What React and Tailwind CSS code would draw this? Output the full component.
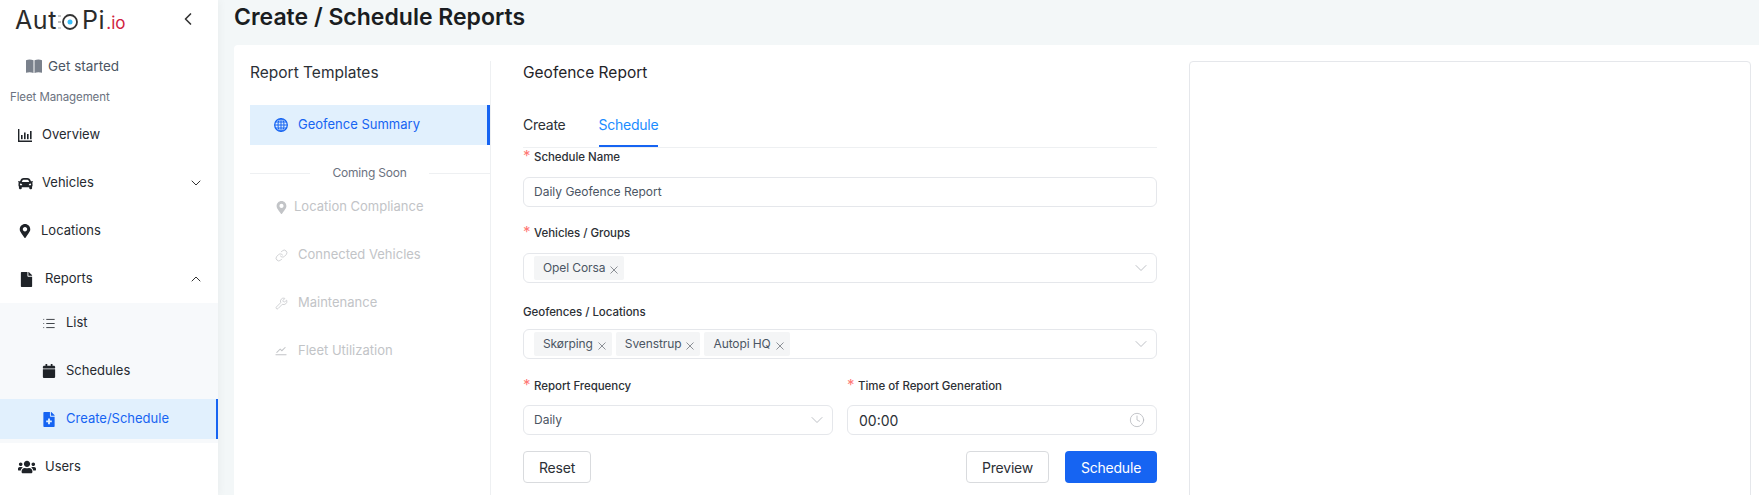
import React from "react";
import { ChevronLeft, ChevronDown, ChevronUp, Clock, Link, Wrench, List } from "lucide-react";
import { FaCar, FaFile, FaCalendar, FaUsers, FaMapMarkerAlt, FaFileMedical } from "react-icons/fa";
import { AiOutlineStock } from "react-icons/ai";

function Logo() {
  return (
    <div className="flex items-baseline text-[#2b2b2b] leading-[24px] ml-[15px] mt-[8px] h-[26px]">
      <span className="text-[25px] font-normal tracking-[0.6px]">Aut</span>
      <svg width="22" height="20" viewBox="0 0 22 20" className="self-center ml-[1px] mt-[1px]">
        <rect x="0" y="3" width="3" height="2" fill="#c9c9c9" />
        <rect x="0" y="9" width="3" height="2" fill="#bdbdbd" />
        <rect x="0" y="15" width="3" height="2" fill="#d8d8d8" />
        <circle cx="12" cy="10" r="7" fill="none" stroke="#333" strokeWidth="1.8" />
        <circle cx="12" cy="10" r="2.5" fill="#38bdf8" />
      </svg>
      <span className="text-[25px] tracking-[0.6px] ml-[2px]">Pi</span>
      <span className="text-[17px] text-[#d0213f] ml-[1px]">.io</span>
    </div>
  );
}

function ChartIcon() {
  return (
    <svg width="14" height="13" viewBox="0 0 14 13" fill="#1f2328">
      <path d="M0 0h1.4v11.4H14V13H0z" />
      <rect x="3" y="6" width="1.6" height="4.2" />
      <rect x="6" y="3.5" width="1.6" height="6.7" />
      <rect x="9" y="5" width="1.6" height="5.2" />
      <rect x="12" y="2" width="1.6" height="8.2" />
    </svg>
  );
}

function BookIcon() {
  return (
    <svg width="16" height="14" viewBox="0 0 16 14" fill="#7a818c">
      <path d="M0 1.2C2.4.2 5.2.3 7.5 1.3V14C5.2 13 2.4 13 0 13.8z" />
      <path d="M16 1.2C13.6.2 10.8.3 8.5 1.3V14c2.3-1 5.1-1 7.5-.2z" />
    </svg>
  );
}

function GlobeIcon() {
  return (
    <svg width="14" height="14" viewBox="0 0 14 14" fill="none" stroke="#1664f2" strokeWidth="1">
      <circle cx="7" cy="7" r="6.3" strokeWidth="1.3" />
      <ellipse cx="7" cy="7" rx="3" ry="6.3" />
      <path d="M7 .7v12.6M.7 7h12.6M1.5 4h11M1.5 10h11" />
    </svg>
  );
}

function TagClose() {
  return (
    <svg width="8" height="8" viewBox="0 0 8 8" className="ml-[5px] mt-[4px] shrink-0" stroke="#80858b" strokeWidth="0.9" fill="none">
      <path d="M.5.5l7 7M7.5.5l-7 7" />
    </svg>
  );
}

function NavItem({ icon, label, gap, chevron }) {
  return (
    <div className="h-[40px] flex items-center pl-[18px] pr-[14px] text-[13px] text-[#262a30]">
      <span className="flex justify-start text-[#1f2328] shrink-0">{icon}</span>
      <span style={{ marginLeft: gap }}>{label}</span>
      {chevron && <span className="ml-auto text-[#333]">{chevron}</span>}
    </div>
  );
}

function SubItem({ icon, label, active }) {
  return (
    <div className={"h-[40px] flex items-center pl-[42px] text-[13px] " + (active ? "bg-[#e1f0fd] text-[#1664f2] border-r-2 border-[#1664f2]" : "text-[#262a30]")}>
      <span className="w-[14px] flex justify-center shrink-0">{icon}</span>
      <span className="ml-[10px]">{label}</span>
    </div>
  );
}

function Sidebar() {
  return (
    <aside className="w-[218px] shrink-0 bg-white h-full flex flex-col overflow-hidden shadow-[2px_0_8px_rgba(0,0,0,0.04)] z-10">
      <div className="flex items-start justify-between pr-[20px] h-[48px]">
        <Logo />
        <ChevronLeft size={20} strokeWidth={2} className="mt-[9px] text-[#333]" />
      </div>
      <div className="flex items-center h-[24px] pl-[26px] mt-[6px] text-[13.5px] text-[#4b5563]">
        <BookIcon />
        <span className="ml-[6px]">Get started</span>
      </div>
      <div className="pl-[10px] mt-[10px] h-[18px] leading-[18px] text-[11.5px] tracking-[-0.1px] text-[#6b7280]">Fleet Management</div>
      <div className="mt-[9px] flex flex-col gap-[8px]">
        <NavItem icon={<ChartIcon />} label="Overview" gap="10px" />
        <NavItem icon={<FaCar size={15} />} label="Vehicles" gap="9px" chevron={<ChevronDown size={16} strokeWidth={1.5} />} />
        <NavItem icon={<FaMapMarkerAlt size={14} />} label="Locations" gap="9px" />
        <NavItem icon={<FaFile size={15} className="ml-[1px]" />} label="Reports" gap="11px" chevron={<ChevronUp size={16} strokeWidth={1.5} />} />
      </div>
      <div className="bg-[#f7f9fb] mt-[4px] pb-[4px] flex flex-col gap-[8px]">
        <SubItem icon={<List size={15} strokeWidth={1.5} />} label="List" />
        <SubItem icon={<FaCalendar size={14} className="text-[#1f2328]" />} label="Schedules" />
        <SubItem icon={<FaFileMedical size={15} />} label="Create/Schedule" active />
      </div>
      <div className="mt-[4px]">
        <NavItem icon={<FaUsers size={18} />} label="Users" gap="9px" />
      </div>
    </aside>
  );
}

function TemplateItem({ icon, label, gap, className = "" }) {
  return (
    <div className={"h-[40px] flex items-center pl-[24px] text-[13px] text-[#c2c4c7] " + className}>
      <span className="w-[14px] flex justify-center shrink-0">{icon}</span>
      <span style={{ marginLeft: gap }}>{label}</span>
    </div>
  );
}

function Templates() {
  return (
    <div className="w-[240px] shrink-0 border-r border-[#eef0f2] mt-[16px] h-[600px] box-content">
      <div className="text-[15.5px] leading-[24px] text-[#2c3036]">Report Templates</div>
      <div className="mt-[20px] h-[40px] w-[240px] bg-[#e1f0fd] border-r-[3px] border-[#1664f2] flex items-center pl-[24px] text-[13px] text-[#1664f2]">
        <GlobeIcon />
        <span className="ml-[10px]">Geofence Summary</span>
      </div>
      <div className="flex items-center mt-[18px] h-[20px] text-[12px] tracking-[-0.2px] text-[#6b7280]">
        <span className="w-[60px] border-t border-[#eef0f2]"></span>
        <span className="w-[119px] text-center">Coming Soon</span>
        <span className="flex-1 border-t border-[#eef0f2]"></span>
      </div>
      <div className="mt-[4px] flex flex-col gap-[8px]">
        <TemplateItem icon={<FaMapMarkerAlt size={13} />} label="Location Compliance" gap="6px" className="text-[13.5px]" />
        <TemplateItem icon={<Link size={13} strokeWidth={1.4} />} label="Connected Vehicles" gap="10px" />
        <TemplateItem icon={<Wrench size={13} strokeWidth={1.4} />} label="Maintenance" gap="10px" />
        <TemplateItem icon={<AiOutlineStock size={14} />} label="Fleet Utilization" gap="10px" />
      </div>
    </div>
  );
}

function Label({ children, required }) {
  return (
    <div className="h-[18px] flex items-center text-[11.5px] font-medium tracking-[-0.05px] text-[#2c3036] leading-[18px]">
      {required && <span className="text-[#ff7875] text-[15px] w-[11px] leading-[14px] font-normal mt-[-2px]">*</span>}
      {children}
    </div>
  );
}

function Tag({ children }) {
  return (
    <span className="h-[24px] flex items-center rounded-[2px] bg-[#f4f5f6] pl-[9px] pr-[6px] text-[12px] tracking-[-0.1px] text-[#4b5563]">
      {children}
      <TagClose />
    </span>
  );
}

function Box({ children, className = "" }) {
  return (
    <div className={"h-[30px] rounded-[6px] border border-[#e5e7eb] flex items-center bg-white " + className}>{children}</div>
  );
}

function SelectChevron() {
  return <ChevronDown size={20} strokeWidth={0.9} className="ml-auto -mr-[1px] text-[#a8acb2]" />;
}

function Form() {
  return (
    <div className="w-[634px] shrink-0 ml-[32px] mt-[16px]">
      <div className="text-[15.5px] leading-[24px] text-[#1f2328]">Geofence Report</div>
      <div className="mt-[28px] h-[35px] flex gap-[33px] border-b border-[#eef0f2] text-[14px] leading-[20px] tracking-[-0.25px]">
        <div className="text-[#2c3036] pt-[2px]">Create</div>
        <div className="text-[#1a8cff] border-b-2 h-[34px] border-[#1664f2] pt-[2px]">Schedule</div>
      </div>
      <Label required>Schedule Name</Label>
      <Box className="mt-[11px] pl-[10px] text-[12px] text-[#4b5563]">Daily Geofence Report</Box>
      <div className="mt-[17px]"><Label required>Vehicles / Groups</Label></div>
      <Box className="mt-[11px] pl-[10px] pr-[6px]">
        <Tag>Opel Corsa</Tag>
        <SelectChevron />
      </Box>
      <div className="mt-[20px]"><Label>Geofences / Locations</Label></div>
      <Box className="mt-[8px] pl-[10px] pr-[6px] gap-[4px]">
        <Tag>Skørping</Tag>
        <Tag>Svenstrup</Tag>
        <Tag>Autopi HQ</Tag>
        <SelectChevron />
      </Box>
      <div className="mt-[18px] grid grid-cols-2 gap-[14px]">
        <div>
          <Label required>Report Frequency</Label>
          <Box className="mt-[10px] pl-[10px] pr-[6px] text-[12px] text-[#4b5563]">
            Daily
            <SelectChevron />
          </Box>
        </div>
        <div>
          <Label required>Time of Report Generation</Label>
          <Box className="mt-[10px] pl-[11px] pr-[11px] text-[14px] text-[#2c3036]">
            00:00
            <Clock size={16} strokeWidth={1.2} className="ml-auto text-[#b5b8bd]" />
          </Box>
        </div>
      </div>
      <div className="mt-[16px] flex items-center">
        <button className="h-[32px] w-[68px] rounded-[4px] border border-[#d9dbde] bg-white text-[14px] tracking-[-0.2px] text-[#2c3036]">Reset</button>
        <button className="ml-auto h-[32px] w-[83px] rounded-[4px] border border-[#d9dbde] bg-white text-[14px] tracking-[-0.2px] text-[#2c3036]">Preview</button>
        <button className="ml-[16px] h-[32px] w-[92px] rounded-[4px] bg-[#1664f2] text-[14px] tracking-[-0.2px] text-white">Schedule</button>
      </div>
    </div>
  );
}

export default function App() {
  return (
    <div className="w-[1759px] h-[495px] overflow-hidden flex bg-[#f3f7f8] font-['Inter',sans-serif]">
      <Sidebar />
      <main className="flex-1 min-w-0 pl-[16px]">
        <h1 className="text-[23px] font-semibold leading-[34px] text-[#1a1d21] h-[45px]">Create / Schedule Reports</h1>
        <div className="bg-white rounded-tl-[4px] pl-[16px] flex h-[500px]">
          <Templates />
          <Form />
          <div className="ml-[32px] mt-[16px] w-[562px] h-[600px] rounded-[4px] border border-[#e5e7eb]"></div>
        </div>
      </main>
    </div>
  );
}
